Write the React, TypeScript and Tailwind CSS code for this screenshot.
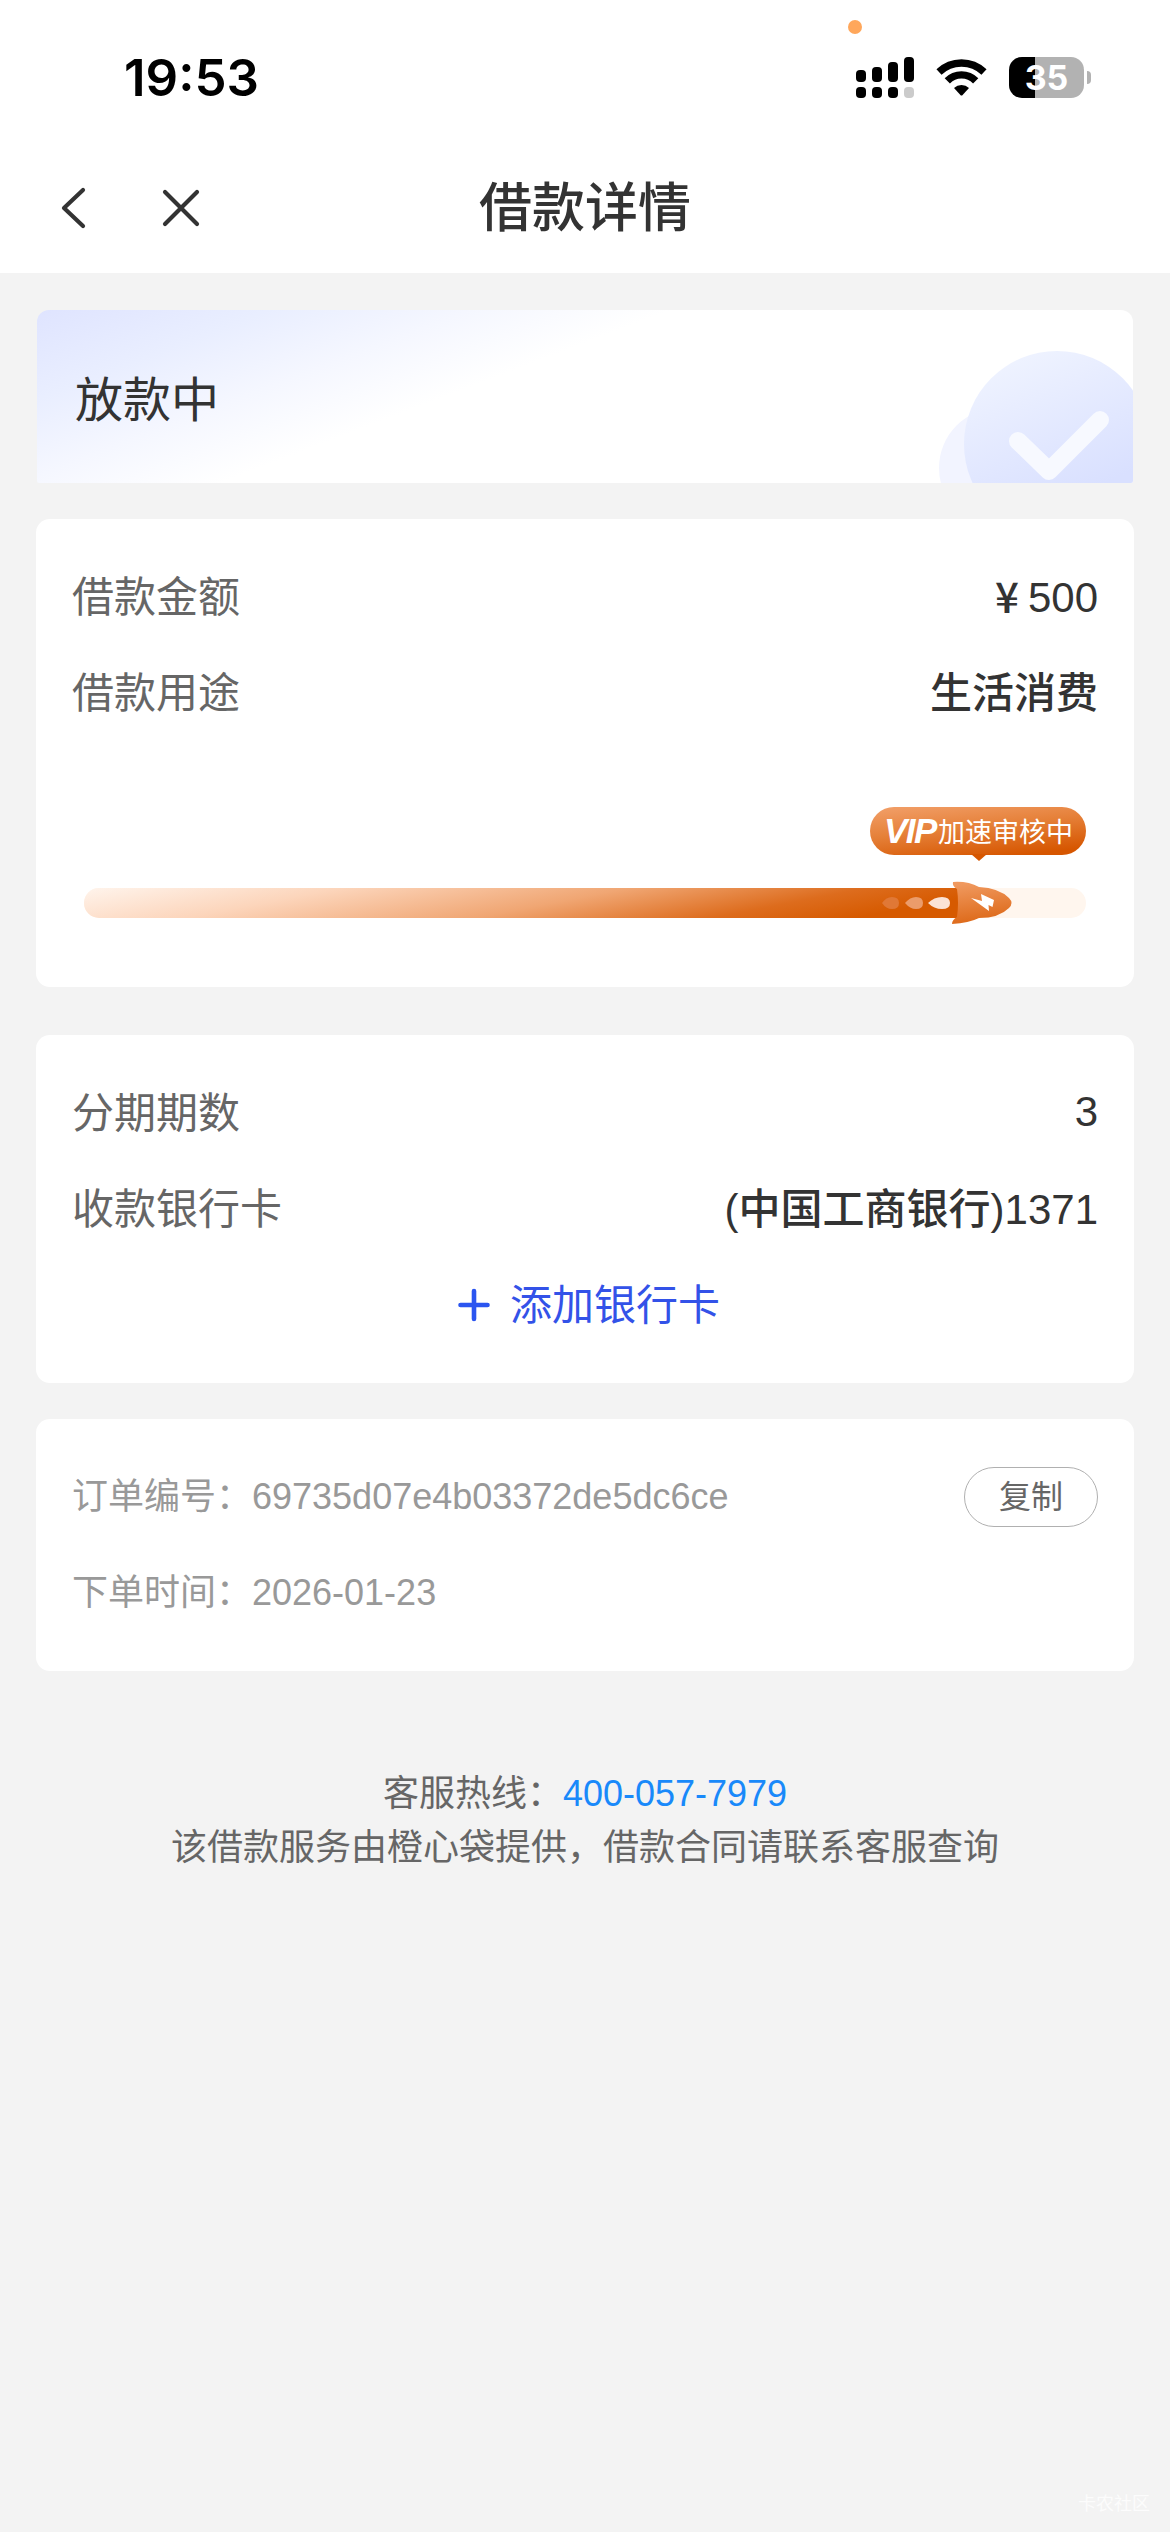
import type { ReactNode } from 'react';

const signalBars = ['h-3', 'h-[15px]', 'h-5', 'h-[25px]'];

function StatusBar() {
  return (
    <div className="relative h-[144px] flex items-start justify-between pl-[124px] pr-[79px]">
      <span className="absolute left-[848px] top-5 w-3.5 h-3.5 rounded-full bg-[#ffa75b]"></span>
      <div className="mt-[52px] h-[52px] leading-[52px] text-[51px] font-semibold text-black font-['Inter',sans-serif]">
        19:53
      </div>

      <div className="mt-[57px] flex items-start">
        {/* Dual SIM signal */}
        <div className="w-[58px] h-[41px] flex flex-col justify-between">
          <div className="flex items-end justify-between h-[25px]">
            {signalBars.map(height => (
              <span key={height} className={`w-2.5 rounded-[4px] bg-black ${height}`}></span>
            ))}
          </div>
          <div className="flex justify-between">
            <span className="w-2.5 h-[11px] rounded-[4px] bg-black"></span>
            <span className="w-2.5 h-[11px] rounded-[4px] bg-black"></span>
            <span className="w-2.5 h-[11px] rounded-[4px] bg-black"></span>
            <span className="w-2.5 h-[11px] rounded-[4px] bg-[#cbcbcb]"></span>
          </div>
        </div>

        <svg className="ml-[22px] mt-[2px]" width="51" height="37" viewBox="0 0 51 37" fill="none">
          <path d="M3 13 A32.5 32.5 0 0 1 48 13" stroke="#000" strokeWidth="7.4" />
          <path d="M11.3 21.8 A20 20 0 0 1 39.7 21.8" stroke="#000" strokeWidth="7.4" />
          <path d="M18 29 A11 11 0 0 1 33 29 L26.6 36 Q25.5 37 24.4 36 Z" fill="#000" />
        </svg>

        <div className="ml-[22px] w-[75px] h-[41px] rounded-[13px] bg-[linear-gradient(90deg,#000_26px,#b2b2b2_26px)] flex items-center justify-center text-white text-[34px] leading-[41px] font-bold font-['Inter',sans-serif]">
          35
        </div>
        <span className="ml-[3px] mt-3.5 w-1 h-[13px] rounded-r-full bg-[#b2b2b2]"></span>
      </div>
    </div>
  );
}

function NavBar() {
  return (
    <div className="h-[129px] grid grid-cols-3 items-center text-[#333333]">
      <div className="flex items-center pl-[60px] -mt-0.5">
        <svg width="27" height="44" viewBox="0 0 27 44" fill="none" stroke="currentColor" strokeWidth="4.2" strokeLinecap="round" strokeLinejoin="round">
          <path d="M23 4 L4 22 L23 40" />
        </svg>
        <svg className="ml-[74px]" width="40" height="40" viewBox="0 0 40 40" fill="none" stroke="currentColor" strokeWidth="4.2" strokeLinecap="round">
          <path d="M4 4 L36 36 M36 4 L4 36" />
        </svg>
      </div>
      <h1 className="text-center text-[53px] leading-[60px] font-medium">借款详情</h1>
    </div>
  );
}

function LoanStatus() {
  return (
    <div className="relative mx-[37px] h-[173px] pl-[38px] pt-2 flex items-center rounded-t-xl rounded-b-[2px] overflow-hidden bg-[linear-gradient(159deg,#dfe4ff_0%,#e9eeff_15%,#f5f7ff_28%,#ffffff_41%)]">
      <svg className="absolute right-0 bottom-0" width="200" height="140" viewBox="0 0 200 140" fill="none">
        <defs>
          <linearGradient id="disc" x1="0.2" y1="0" x2="0.55" y2="0.8">
            <stop offset="0" stopColor="#f0f4ff" />
            <stop offset="1" stopColor="#d9e0ff" />
          </linearGradient>
        </defs>
        <circle cx="66" cy="125" r="60" fill="#f2f4ff" />
        <circle cx="124" cy="101" r="93" fill="url(#disc)" />
        <path d="M85 98 L116 128 L167 77" stroke="#f7f9ff" strokeWidth="18" strokeLinecap="round" strokeLinejoin="round" />
      </svg>
      <span className="text-[48px] leading-[60px] text-[#333333]">放款中</span>
    </div>
  );
}

function Card({ className, children }: { className: string; children: ReactNode }) {
  return <section className={`mx-9 px-9 bg-white rounded-[14px] ${className}`}>{children}</section>;
}

function Row({ label, children }: { label: string; children: ReactNode }) {
  return (
    <div className="h-24 flex items-center justify-between text-[42px] leading-[60px]">
      <span className="pt-0.5 text-[#666666]">{label}</span>
      <span className="pt-0.5 text-[#333333] font-medium">{children}</span>
    </div>
  );
}

function Rocket() {
  return (
    <svg className="absolute left-[796px] -top-[7px]" width="134" height="44" viewBox="0 0 134 44" fill="none">
      <defs>
        <linearGradient id="rocket" x1="0.4" y1="0" x2="0.6" y2="1">
          <stop offset="0" stopColor="#f0995f" />
          <stop offset="1" stopColor="#dc6614" />
        </linearGradient>
      </defs>
      {/* Exhaust */}
      <path d="M2 22 Q6 16 12 16 Q19 16 19 22 Q19 28 12 28 Q6 28 2 22Z" fill="#e07836" />
      <path d="M25 22 Q30 16 36 16 Q43 16 43 22 Q43 28 36 28 Q30 28 25 22Z" fill="#eb9c6b" />
      <path d="M48 22 Q54 16 62 16 Q70 16 70 22 Q70 28 62 28 Q54 28 48 22Z" fill="#fbe3d5" />
      {/* Body */}
      <path d="M73 1 Q88 0 99 6 Q119 7 129 17 Q134 22 129 27 Q119 37 99 37 Q89 42 72 43 Q72 39 77 36 Q79 22 77 8 Q72 5 73 1Z" fill="url(#rocket)" />
      <path d="M91 17 L102 20 L101 13 L114 19 L112.5 26 L108.5 24 L109 30Z" fill="#fff" />
    </svg>
  );
}

function ReviewProgress() {
  return (
    <div className="mt-[66px] ml-3 w-[1002px] flex flex-col">
      <div className="relative self-end w-[216px] h-12 rounded-full bg-[linear-gradient(174deg,#f2a06a_0%,#e57f37_45%,#d65600_90%)] flex items-center pl-3.5 text-white">
        <span className="w-[54px] text-[35px] leading-[48px] font-bold italic tracking-[-1.5px] font-['Liberation_Sans',sans-serif]">VIP</span>
        <span className="pt-[3px] text-[27px] leading-[48px] whitespace-nowrap">加速审核中</span>
        <svg className="absolute left-[101px] top-[47px]" width="16" height="8" viewBox="0 0 16 8">
          <path d="M0 0 H16 L8 7Z" fill="#d65600" />
        </svg>
      </div>
      <div className="relative mt-[33px] h-[30px] rounded-full bg-[#fff6ee]">
        <div className="w-[875px] h-[30px] rounded-l-full bg-[linear-gradient(169deg,#fff4ec_0%,#fcd5bb_25%,#f0a673_53%,#dd6c1d_76%,#d65a00_90%)]"></div>
        <Rocket />
      </div>
    </div>
  );
}

export default function App() {
  return (
    <div className="w-[1170px] h-[2532px] flex flex-col bg-[#f3f3f3] font-['Liberation_Sans','Noto_Sans_CJK_SC',sans-serif]">
      <header className="h-[273px] bg-white">
        <StatusBar />
        <NavBar />
      </header>

      <main className="pt-[37px] flex-1">
        <LoanStatus />

        <Card className="mt-9 pt-[30px] h-[468px]">
          <Row label="借款金额">
            <span className="relative -top-px inline-block w-[42px] text-center font-['Noto_Sans_CJK_SC',sans-serif]">¥</span>
            <span className="relative -top-0.5 font-normal">500</span>
          </Row>
          <Row label="借款用途">生活消费</Row>
          <ReviewProgress />
        </Card>

        <Card className="mt-12 pt-[30px] h-[348px]">
          <Row label="分期期数">
            <span className="relative -top-0.5 font-normal">3</span>
          </Row>
          <Row label="收款银行卡">(中国工商银行)1371</Row>
          <button className="w-full h-24 pl-2 flex items-center justify-center text-[42px] leading-[60px] text-[#3352e8]">
            <svg className="mr-5" width="32" height="34" viewBox="0 0 32 34" stroke="#2b55f0" strokeWidth="4.6" strokeLinecap="round">
              <path d="M16 3 V31 M2.5 17 H29.5" />
            </svg>
            <span className="pt-0.5">添加银行卡</span>
          </button>
        </Card>

        <Card className="mt-9 pt-[30px] h-[252px] text-[36px] text-[#999999]">
          <div className="h-24 flex items-center justify-between">
            <span>订单编号：69735d07e4b03372de5dc6ce</span>
            <button className="w-[134px] h-[60px] rounded-full border border-[#b0b0b0] text-[32px] leading-[56px] text-[#666666]">
              复制
            </button>
          </div>
          <div className="h-24 flex items-center">下单时间：2026-01-23</div>
        </Card>

        <div className="mt-24 text-center text-[36px] leading-[54px] text-[#666666]">
          <p>
            客服热线：<a className="text-[#1989fa]">400-057-7979</a>
          </p>
          <p>该借款服务由橙心袋提供，借款合同请联系客服查询</p>
        </div>
      </main>

      <footer className="pr-5 pb-[15px] text-right text-[18px] leading-[26px] text-[#fcfcfc]">卡农社区</footer>
    </div>
  );
}
